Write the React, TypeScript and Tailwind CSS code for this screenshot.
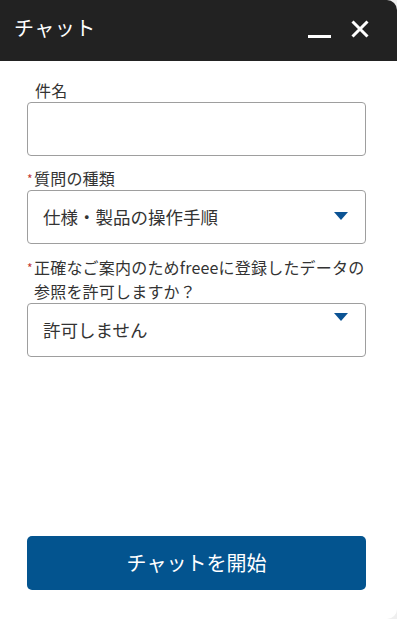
import React from 'react';

const font = { fontFamily: '"Noto Sans CJK JP", "Noto Sans", sans-serif' };

function Caret({ className }: { className?: string }) {
  return (
    <svg width="14" height="8" viewBox="0 0 14 8" className={className}>
      <path d="M0 0 L14 0 L7 8 Z" fill="#0b5394" />
    </svg>
  );
}

function Label({ required, children }: { required?: boolean; children: React.ReactNode }) {
  return (
    <div className="flex text-[16px] leading-[24px] text-[#333333]">
      {required ? (
        <span className="mt-[7px] h-[12px] w-[7px] shrink-0 text-[12px] leading-[12px] text-[#c23934]">*</span>
      ) : (
        <span className="w-[8px] shrink-0" />
      )}
      <span className="tracking-[0.2px]">{children}</span>
    </div>
  );
}

function Select({ value, caretTop }: { value: string; caretTop?: boolean }) {
  return (
    <div className="relative flex h-[54px] w-[339px] items-center rounded-[4px] border border-[#9e9e9e] bg-white pl-[15px]">
      <span className="text-[17.5px] text-[#333333]">{value}</span>
      <Caret
        className={
          caretTop
            ? 'absolute right-[17px] top-[9px]'
            : 'absolute right-[17px] top-[21px]'
        }
      />
    </div>
  );
}

export default function App() {
  return (
    <div className="h-[619px] w-[397px] bg-[#efefef]" style={font}>
      <div className="flex h-full w-full flex-col overflow-hidden rounded-tr-[10px] rounded-br-[10px] bg-white">
        {/* header */}
        <div className="flex h-[61px] shrink-0 items-start justify-between bg-[#222222] pl-[14px] pr-[28px]">
          <span className="mt-[13px] text-[20px] leading-[30px] tracking-[0.5px] text-white">チャット</span>
          <div className="flex items-start gap-[20px] pt-[20px]">
            <div className="mt-[15px] h-[3px] w-[23px] bg-white" />
            <svg width="18" height="18" viewBox="0 0 18 18">
              <path d="M1.5 1.5 L16.5 16.5 M16.5 1.5 L1.5 16.5" stroke="white" strokeWidth="3" />
            </svg>
          </div>
        </div>

        {/* form */}
        <div className="flex flex-1 flex-col px-[27px] pt-[17px]">
          <Label>件名</Label>
          <div className="h-[54px] w-[339px] rounded-[4px] border border-[#9e9e9e] bg-white" />

          <div className="mt-[10px]">
            <Label required>質問の種類</Label>
          </div>
          <Select value="仕様・製品の操作手順" />

          <div className="mt-[11px]">
            <Label required>正確なご案内のためfreeeに登録したデータの参照を許可しますか？</Label>
          </div>
          <Select value="許可しません" caretTop />

          <div className="flex-1" />
          <button className="mb-[29px] flex h-[54px] w-[339px] items-center justify-center rounded-[5px] bg-[#03548f] text-[20px] text-white">
            チャットを開始
          </button>
        </div>
      </div>
    </div>
  );
}
